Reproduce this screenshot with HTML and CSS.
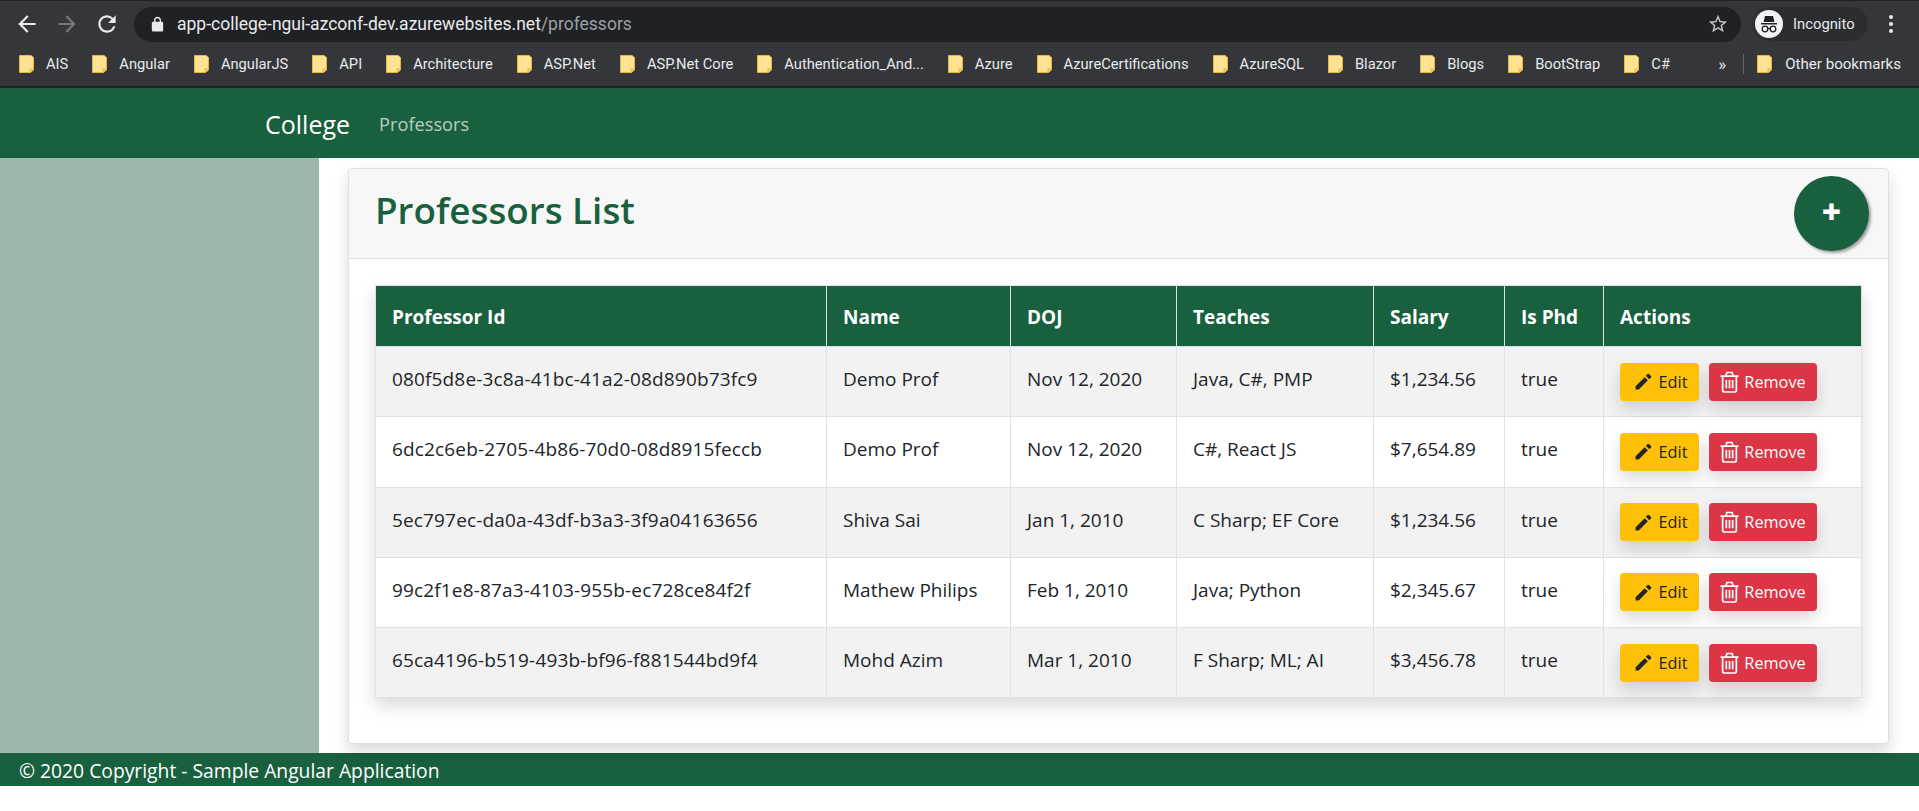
FILE: index.html
```html
<!DOCTYPE html>
<html lang="en">
<head>
    <meta charset="UTF-8">
    <meta name="viewport" content="width=device-width, initial-scale=1.0">
    <title>College - Professors</title>
    <link rel="stylesheet" href="styles.css">
</head>
<body>
    <svg class="icon-defs" width="0" height="0">
        <symbol id="folder" viewBox="0 0 15 18">
            <path d="M.5.5h11.500l2.500 2v12.500l-3 2.500H.5z" fill="#fde293" stroke="#e8b93a"/>
            <path d="M11 17v-3h3.500" fill="#f5cf5e" stroke="#e8b93a"/>
        </symbol>
        <symbol id="pencil" viewBox="0 0 24 24">
            <path d="M2 18v4h4L17.500 10.500l-4-4L2 18zM21.500 6.800a1.200 1.200 0 0 0 0-1.700l-2.600-2.600a1.200 1.200 0 0 0-1.700 0l-2.200 2.200 4.300 4.300 2.200-2.200z"/>
        </symbol>
        <symbol id="trash" viewBox="0 0 18 20">
            <path d="M.5 4.500h17M2.500 4.500v13a2 2 0 0 0 2 2h9a2 2 0 0 0 2-2v-13M5.500 4.500l1-3.500h5l1 3.500M6 8v8M9 8v8M12 8v8" fill="none" stroke="currentColor" stroke-width="1.600"/>
        </symbol>
    </svg>

    <div class="browser">
        <div class="toolbar">
            <svg class="nav-icon" viewBox="0 0 24 24"><path d="M20 11H7.830l5.590-5.590L12 4l-8 8 8 8 1.410-1.410L7.830 13H20v-2z"/></svg>
            <svg class="nav-icon nav-off" viewBox="0 0 24 24"><path d="M4 11h12.170l-5.590-5.590L12 4l8 8-8 8-1.410-1.410L16.170 13H4v-2z"/></svg>
            <svg class="nav-icon" viewBox="0 0 24 24"><path d="M17.650 6.350A7.958 7.958 0 0 0 12 4c-4.420 0-7.990 3.580-7.990 8s3.570 8 7.990 8c3.730 0 6.840-2.550 7.730-6h-2.080A5.990 5.990 0 0 1 12 18c-3.310 0-6-2.690-6-6s2.690-6 6-6c1.660 0 3.140.690 4.220 1.780L13 11h7V4l-2.350 2.350z"/></svg>
            <div class="omnibox">
                <svg class="lock" viewBox="0 0 24 24"><path d="M18 8h-1V6c0-2.760-2.240-5-5-5S7 3.240 7 6v2H6c-1.100 0-2 .9-2 2v10c0 1.100.9 2 2 2h12c1.100 0 2-.9 2-2V10c0-1.100-.9-2-2-2zM9 6c0-1.660 1.340-3 3-3s3 1.340 3 3v2H9V6z"/></svg>
                <span class="url">app-college-ngui-azconf-dev.azurewebsites.net<span class="url-path">/professors</span></span>
                <svg class="star" viewBox="0 0 24 24"><path d="M22 9.240l-7.190-.62L12 2 9.190 8.630 2 9.240l5.460 4.730L5.820 21 12 17.270 18.180 21l-1.630-7.030L22 9.240zM12 15.400l-3.760 2.270 1-4.280-3.320-2.880 4.380-.38L12 6.100l1.710 4.040 4.380.38-3.320 2.880 1 4.280L12 15.400z"/></svg>
            </div>
            <div class="profile">
                <svg class="incognito" viewBox="0 0 28 28">
                    <circle cx="14" cy="14" r="14" fill="#f1f3f4"/>
                    <path d="M10 6h8l1.500 6h-11zM6 13h16v1.500H6z" fill="#202124"/>
                    <circle cx="10" cy="19" r="2.800" fill="none" stroke="#202124" stroke-width="1.300"/>
                    <circle cx="18" cy="19" r="2.800" fill="none" stroke="#202124" stroke-width="1.300"/>
                    <path d="M12.800 18.500h2.400" stroke="#202124" stroke-width="1.300"/>
                </svg>
                <span>Incognito</span>
            </div>
            <div class="menu-dots"><i></i><i></i><i></i></div>
        </div>
        <div class="bookmarks">
            <div class="bookmark"><svg><use href="#folder"/></svg>AIS</div>
            <div class="bookmark"><svg><use href="#folder"/></svg>Angular</div>
            <div class="bookmark"><svg><use href="#folder"/></svg>AngularJS</div>
            <div class="bookmark"><svg><use href="#folder"/></svg>API</div>
            <div class="bookmark"><svg><use href="#folder"/></svg>Architecture</div>
            <div class="bookmark"><svg><use href="#folder"/></svg>ASP.Net</div>
            <div class="bookmark"><svg><use href="#folder"/></svg>ASP.Net Core</div>
            <div class="bookmark"><svg><use href="#folder"/></svg>Authentication_And...</div>
            <div class="bookmark"><svg><use href="#folder"/></svg>Azure</div>
            <div class="bookmark"><svg><use href="#folder"/></svg>AzureCertifications</div>
            <div class="bookmark"><svg><use href="#folder"/></svg>AzureSQL</div>
            <div class="bookmark"><svg><use href="#folder"/></svg>Blazor</div>
            <div class="bookmark"><svg><use href="#folder"/></svg>Blogs</div>
            <div class="bookmark"><svg><use href="#folder"/></svg>BootStrap</div>
            <div class="bookmark"><svg><use href="#folder"/></svg>C#</div>
            <div class="bookmark-end">
                <span class="more">»</span>
                <span class="separator"></span>
                <div class="bookmark bookmark-other"><svg><use href="#folder"/></svg>Other bookmarks</div>
            </div>
        </div>
    </div>

    <nav class="navbar">
        <a class="brand" href="#">College</a>
        <a class="nav-link" href="#">Professors</a>
    </nav>

    <div class="main">
        <aside class="sidebar"></aside>
        <div class="content">
            <div class="card">
                <div class="card-header">
                    <h1>Professors List</h1>
                    <button class="add-button">+</button>
                </div>
                <div class="card-body">
                    <table class="prof-table">
                        <colgroup>
                            <col class="col-id"><col class="col-name"><col class="col-doj"><col class="col-teaches"><col class="col-salary"><col class="col-phd"><col class="col-actions">
                        </colgroup>
                        <thead>
                            <tr><th>Professor Id</th><th>Name</th><th>DOJ</th><th>Teaches</th><th>Salary</th><th>Is Phd</th><th>Actions</th></tr>
                        </thead>
                        <tbody>
                            <tr>
                                <td class="prof-id">080f5d8e-3c8a-41bc-41a2-08d890b73fc9</td><td>Demo Prof</td><td>Nov 12, 2020</td><td>Java, C#, PMP</td><td>$1,234.56</td><td>true</td>
                                <td class="actions"><button class="btn btn-edit"><svg><use href="#pencil"/></svg>Edit</button><button class="btn btn-remove"><svg><use href="#trash"/></svg>Remove</button></td>
                            </tr>
                            <tr>
                                <td class="prof-id">6dc2c6eb-2705-4b86-70d0-08d8915feccb</td><td>Demo Prof</td><td>Nov 12, 2020</td><td>C#, React JS</td><td>$7,654.89</td><td>true</td>
                                <td class="actions"><button class="btn btn-edit"><svg><use href="#pencil"/></svg>Edit</button><button class="btn btn-remove"><svg><use href="#trash"/></svg>Remove</button></td>
                            </tr>
                            <tr>
                                <td class="prof-id">5ec797ec-da0a-43df-b3a3-3f9a04163656</td><td>Shiva Sai</td><td>Jan 1, 2010</td><td>C Sharp; EF Core</td><td>$1,234.56</td><td>true</td>
                                <td class="actions"><button class="btn btn-edit"><svg><use href="#pencil"/></svg>Edit</button><button class="btn btn-remove"><svg><use href="#trash"/></svg>Remove</button></td>
                            </tr>
                            <tr>
                                <td class="prof-id">99c2f1e8-87a3-4103-955b-ec728ce84f2f</td><td>Mathew Philips</td><td>Feb 1, 2010</td><td>Java; Python</td><td>$2,345.67</td><td>true</td>
                                <td class="actions"><button class="btn btn-edit"><svg><use href="#pencil"/></svg>Edit</button><button class="btn btn-remove"><svg><use href="#trash"/></svg>Remove</button></td>
                            </tr>
                            <tr>
                                <td class="prof-id">65ca4196-b519-493b-bf96-f881544bd9f4</td><td>Mohd Azim</td><td>Mar 1, 2010</td><td>F Sharp; ML; AI</td><td>$3,456.78</td><td>true</td>
                                <td class="actions"><button class="btn btn-edit"><svg><use href="#pencil"/></svg>Edit</button><button class="btn btn-remove"><svg><use href="#trash"/></svg>Remove</button></td>
                            </tr>
                        </tbody>
                    </table>
                </div>
            </div>
        </div>
    </div>

    <footer class="footer">© 2020 Copyright - Sample Angular Application</footer>
</body>
</html>
```
FILE: styles.css
```css
* {
    box-sizing: border-box;
}
html, body {
    height: 811px;
    overflow: hidden;
}
body {
    margin: 0;
    font-family: "Open Sans", sans-serif;
    font-size: 19px;
    color: #212529;
    background-color: #fff;
}
.icon-defs {
    display: block;
    height: 0;
}

/* browser chrome */
.browser {
    height: 88px;
    background-color: #35363a;
    border-top: 1px solid #202124;
    border-bottom: 2px solid #202124;
    font-family: Roboto, sans-serif;
    color: #e8eaed;
}
.toolbar {
    display: flex;
    align-items: center;
    height: 46px;
    padding-left: 14px;
}
.nav-icon {
    width: 26px;
    height: 26px;
    margin-right: 14px;
    fill: #e8eaed;
}
.nav-off {
    fill: #75777a;
}
.omnibox {
    display: flex;
    align-items: center;
    width: 1607px;
    height: 35px;
    padding: 0 12px 0 15px;
    background-color: #202124;
    border-radius: 18px;
}
.lock {
    width: 17px;
    height: 17px;
    fill: #e8eaed;
}
.url {
    margin-left: 11px;
    font-size: 17.500px;
    flex: 1;
}
.url-path {
    color: #9aa0a6;
}
.star {
    width: 22px;
    height: 22px;
    fill: #c4c7c5;
}
.profile {
    display: flex;
    align-items: center;
    width: 115px;
    height: 34px;
    margin-left: 12px;
    padding-left: 2px;
    border-radius: 17px;
    background-color: #2c2d30;
    font-size: 14.800px;
}
.incognito {
    width: 28px;
    height: 28px;
    margin-right: 10px;
}
.menu-dots {
    display: flex;
    flex-direction: column;
    gap: 3px;
    margin-left: 21px;
}
.menu-dots i {
    width: 4px;
    height: 4px;
    border-radius: 50%;
    background-color: #e8eaed;
}
.bookmarks {
    display: flex;
    align-items: center;
    gap: 24px;
    height: 39px;
    padding: 0 0 5px 19px;
    font-size: 14.700px;
}
.bookmark {
    display: flex;
    align-items: center;
    white-space: nowrap;
}
.bookmark svg {
    width: 15px;
    height: 18px;
    margin-right: 12px;
}
.bookmark-other {
    font-size: 15.100px;
}
.bookmark-other svg {
    margin-right: 13px;
}
.bookmark-end {
    display: flex;
    align-items: center;
    margin-left: auto;
    padding-right: 18px;
}
.more {
    margin-right: 17px;
    font-size: 17px;
}
.separator {
    width: 1px;
    height: 20px;
    margin-right: 13px;
    background-color: #5f6368;
}

/* app */
.navbar {
    display: flex;
    align-items: center;
    height: 70px;
    padding: 2px 0 0 265px;
    background-color: #19603e;
}
.brand {
    margin-right: 29px;
    color: #fff;
    font-size: 25px;
    text-decoration: none;
}
.nav-link {
    color: rgba(255, 255, 255, .7);
    font-size: 18.200px;
    text-decoration: none;
}
.main {
    display: flex;
    height: 595px;
}
.sidebar {
    width: 321px;
    background-color: #9db8a8;
}
.content {
    flex: 1;
    padding: 10px 30px 0 29px;
}
.card {
    height: 576px;
    border: 1px solid #dfdfdf;
    border-radius: 4px;
    box-shadow: 0 8px 16px rgba(0, 0, 0, .15);
    background-color: #fff;
}
.card-header {
    display: flex;
    align-items: center;
    justify-content: space-between;
    height: 90px;
    padding: 0 19px 0 26px;
    background-color: #f7f7f7;
    border-bottom: 1px solid #dfdfdf;
    border-radius: 4px 4px 0 0;
}
.card-header h1 {
    margin: 0 0 8px;
    color: #19603e;
    font-size: 36.800px;
    font-weight: 600;
}
.add-button {
    width: 75px;
    height: 75px;
    padding: 0 0 5px;
    border: 0;
    border-radius: 50%;
    background-color: #19603e;
    box-shadow: 2px 2px 3px #999;
    color: #fff;
    font-family: "Open Sans", sans-serif;
    font-size: 33px;
    font-weight: 800;
}
.card-body {
    padding: 26px 26px 0;
}
.prof-table {
    width: 1486px;
    table-layout: fixed;
    border-collapse: collapse;
    box-shadow: 0 8px 16px rgba(0, 0, 0, .15);
}
.col-id { width: 451px; }
.col-name { width: 184px; }
.col-doj { width: 166px; }
.col-teaches { width: 197px; }
.col-salary { width: 131px; }
.col-phd { width: 99px; }
.col-actions { width: 258px; }
.prof-table th {
    height: 61px;
    padding: 2px 16px 0;
    background-color: #19603e;
    border: 1px solid #dee2e6;
    border-bottom: 0;
    color: #fff;
    font-weight: 700;
    text-align: left;
}
.prof-table td {
    height: 70.250px;
    padding: 0 16px 5px;
    border: 1px solid #dee2e6;
    white-space: nowrap;
}
.prof-table td.prof-id {
    letter-spacing: .15px;
}
.prof-table tbody tr:nth-child(odd) {
    background-color: #f2f2f2;
}
.prof-table td.actions {
    padding-bottom: 0;
}
.btn {
    display: inline-flex;
    align-items: center;
    justify-content: center;
    height: 38px;
    padding: 0;
    border: 0;
    border-radius: 4px;
    box-shadow: 0 8px 16px rgba(0, 0, 0, .15);
    font-family: "Open Sans", sans-serif;
    font-size: 16.300px;
    vertical-align: middle;
}
.btn svg {
    margin-right: 6px;
}
.btn-edit {
    width: 79px;
    margin-right: 10px;
    padding-left: 2px;
    background-color: #ffc107;
    color: #212529;
}
.btn-edit svg {
    width: 19px;
    height: 19px;
    fill: #212529;
}
.btn-remove {
    width: 108px;
    background-color: #dc3545;
    color: #fff;
}
.btn-remove svg {
    width: 19px;
    height: 22px;
    margin-right: 5px;
}
.footer {
    height: 33px;
    padding: 2px 0 0 19px;
    background-color: #19603e;
    color: #fff;
    font-size: 19.300px;
    line-height: 32px;
}
```
